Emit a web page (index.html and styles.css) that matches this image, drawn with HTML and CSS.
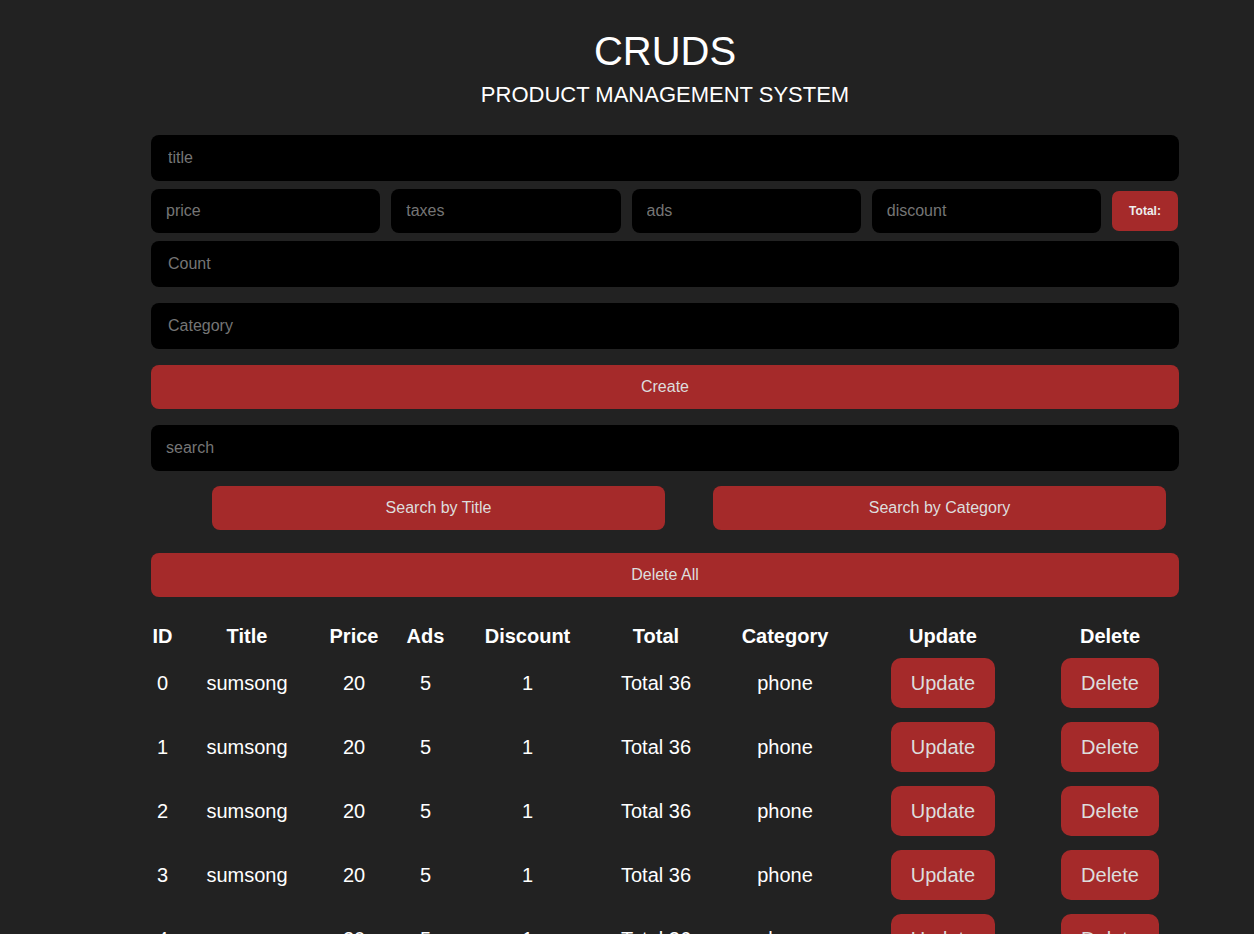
FILE: index.html
```html
<!DOCTYPE html>
<html lang="en">
<head>
<meta charset="UTF-8">
<title>CRUDS</title>
<link rel="stylesheet" href="styles.css">
</head>
<body>
<div class="app">
  <header class="head">
    <h1 class="head-title">CRUDS</h1>
    <p class="head-sub">PRODUCT MANAGEMENT SYSTEM</p>
  </header>

  <section class="form">
    <input class="field field-wide" type="text" placeholder="title">
    <div class="price-row">
      <input class="field field-small" type="number" placeholder="price">
      <input class="field field-small" type="number" placeholder="taxes">
      <input class="field field-small" type="number" placeholder="ads">
      <input class="field field-small" type="number" placeholder="discount">
      <small class="total">Total:</small>
    </div>
    <input class="field field-wide" type="number" placeholder="Count">
    <input class="field field-wide gap-top" type="text" placeholder="Category">
    <button class="btn btn-block gap-top">Create</button>
  </section>

  <section class="search">
    <input class="field field-search" type="text" placeholder="search">
    <div class="search-btns">
      <button class="btn btn-search">Search by Title</button>
      <button class="btn btn-search">Search by Category</button>
    </div>
    <button class="btn btn-block btn-delall">Delete All</button>
  </section>

  <table class="table">
    <colgroup>
      <col class="c-id"><col class="c-title"><col class="c-price"><col class="c-ads"><col class="c-disc"><col class="c-total"><col class="c-cat"><col class="c-upd"><col class="c-del">
    </colgroup>
    <thead>
      <tr><th>ID</th><th>Title</th><th>Price</th><th>Ads</th><th>Discount</th><th>Total</th><th>Category</th><th>Update</th><th>Delete</th></tr>
    </thead>
    <tbody>
      <tr><td>0</td><td>sumsong</td><td>20</td><td>5</td><td>1</td><td>Total 36</td><td>phone</td><td><button class="btn btn-row">Update</button></td><td><button class="btn btn-row">Delete</button></td></tr>
      <tr><td>1</td><td>sumsong</td><td>20</td><td>5</td><td>1</td><td>Total 36</td><td>phone</td><td><button class="btn btn-row">Update</button></td><td><button class="btn btn-row">Delete</button></td></tr>
      <tr><td>2</td><td>sumsong</td><td>20</td><td>5</td><td>1</td><td>Total 36</td><td>phone</td><td><button class="btn btn-row">Update</button></td><td><button class="btn btn-row">Delete</button></td></tr>
      <tr><td>3</td><td>sumsong</td><td>20</td><td>5</td><td>1</td><td>Total 36</td><td>phone</td><td><button class="btn btn-row">Update</button></td><td><button class="btn btn-row">Delete</button></td></tr>
      <tr><td>4</td><td>sumsong</td><td>20</td><td>5</td><td>1</td><td>Total 36</td><td>phone</td><td><button class="btn btn-row">Update</button></td><td><button class="btn btn-row">Delete</button></td></tr>
      <tr><td>5</td><td>sumsong</td><td>20</td><td>5</td><td>1</td><td>Total 36</td><td>phone</td><td><button class="btn btn-row">Update</button></td><td><button class="btn btn-row">Delete</button></td></tr>
    </tbody>
  </table>
</div>
</body>
</html>
```

FILE: styles.css
```css
* { box-sizing: border-box; }

html, body {
  margin: 0;
  background: #222222;
  color: #ffffff;
  font-family: "Liberation Sans", Arial, sans-serif;
}

.app {
  width: 1028px;
  margin-left: 151px;
  padding-bottom: 40px;
}

.head {
  padding-top: 28px;
  text-align: center;
}

.head-title {
  margin: 0;
  font-size: 40px;
  font-weight: 400;
  line-height: 46px;
}

.head-sub {
  margin: 8px 0 0;
  font-size: 22px;
  line-height: 25px;
}

.form {
  margin-top: 28px;
  display: flex;
  flex-direction: column;
}

.field {
  display: block;
  border: none;
  outline: none;
  background: #000000;
  color: #ffffff;
  font-family: "Liberation Sans", Arial, sans-serif;
  font-size: 16px;
  border-radius: 8px;
  -moz-appearance: textfield;
}
.field::-webkit-outer-spin-button,
.field::-webkit-inner-spin-button { -webkit-appearance: none; margin: 0; }

.field::placeholder { color: #757575; }

.field-wide {
  width: 100%;
  height: 46px;
  padding: 0 17px;
}

.price-row {
  display: flex;
  align-items: center;
  gap: 11px;
  margin: 8px 0;
}

.field-small {
  flex: 1;
  min-width: 0;
  height: 44px;
  padding: 0 15px;
}

.total {
  width: 66px;
  height: 40px;
  margin-right: 1px;
  display: flex;
  align-items: center;
  justify-content: center;
  background: #a52a2a;
  border-radius: 7px;
  font-size: 12px;
  font-weight: 700;
  color: #eeeeee;
}

.gap-top { margin-top: 16px; }

.btn {
  border: none;
  background: #a52a2a;
  color: #dddddd;
  font-family: "Liberation Sans", Arial, sans-serif;
  font-size: 16px;
  cursor: pointer;
}

.btn-block {
  display: block;
  width: 100%;
  height: 44px;
  border-radius: 8px;
}

.search {
  margin-top: 16px;
}

.field-search {
  width: 100%;
  height: 46px;
  padding: 0 15px;
}

.search-btns {
  display: flex;
  gap: 48px;
  padding-left: 61px;
  margin-top: 15px;
}

.btn-search {
  width: 453px;
  height: 44px;
  border-radius: 8px;
}

.btn-delall {
  margin-top: 23px;
}

.table {
  margin-top: 24px;
  table-layout: fixed;
  width: 1033px;
  border-collapse: collapse;
  border-spacing: 0;
  text-align: center;
}

.c-id { width: 23px; }
.c-title { width: 146px; }
.c-price { width: 68px; }
.c-ads { width: 75px; }
.c-disc { width: 129px; }
.c-total { width: 128px; }
.c-cat { width: 130px; }
.c-upd { width: 186px; }
.c-del { width: 148px; }

.table th {
  padding: 3px 0;
  font-size: 20px;
  font-weight: 700;
  line-height: 24px;
}

.table td {
  padding: 7px 0;
  font-size: 20px;
  line-height: 24px;
  vertical-align: middle;
}

.btn-row {
  font-size: 20px;
  line-height: 24px;
  padding: 13px 20px;
  border-radius: 10px;
  vertical-align: middle;
}
```
